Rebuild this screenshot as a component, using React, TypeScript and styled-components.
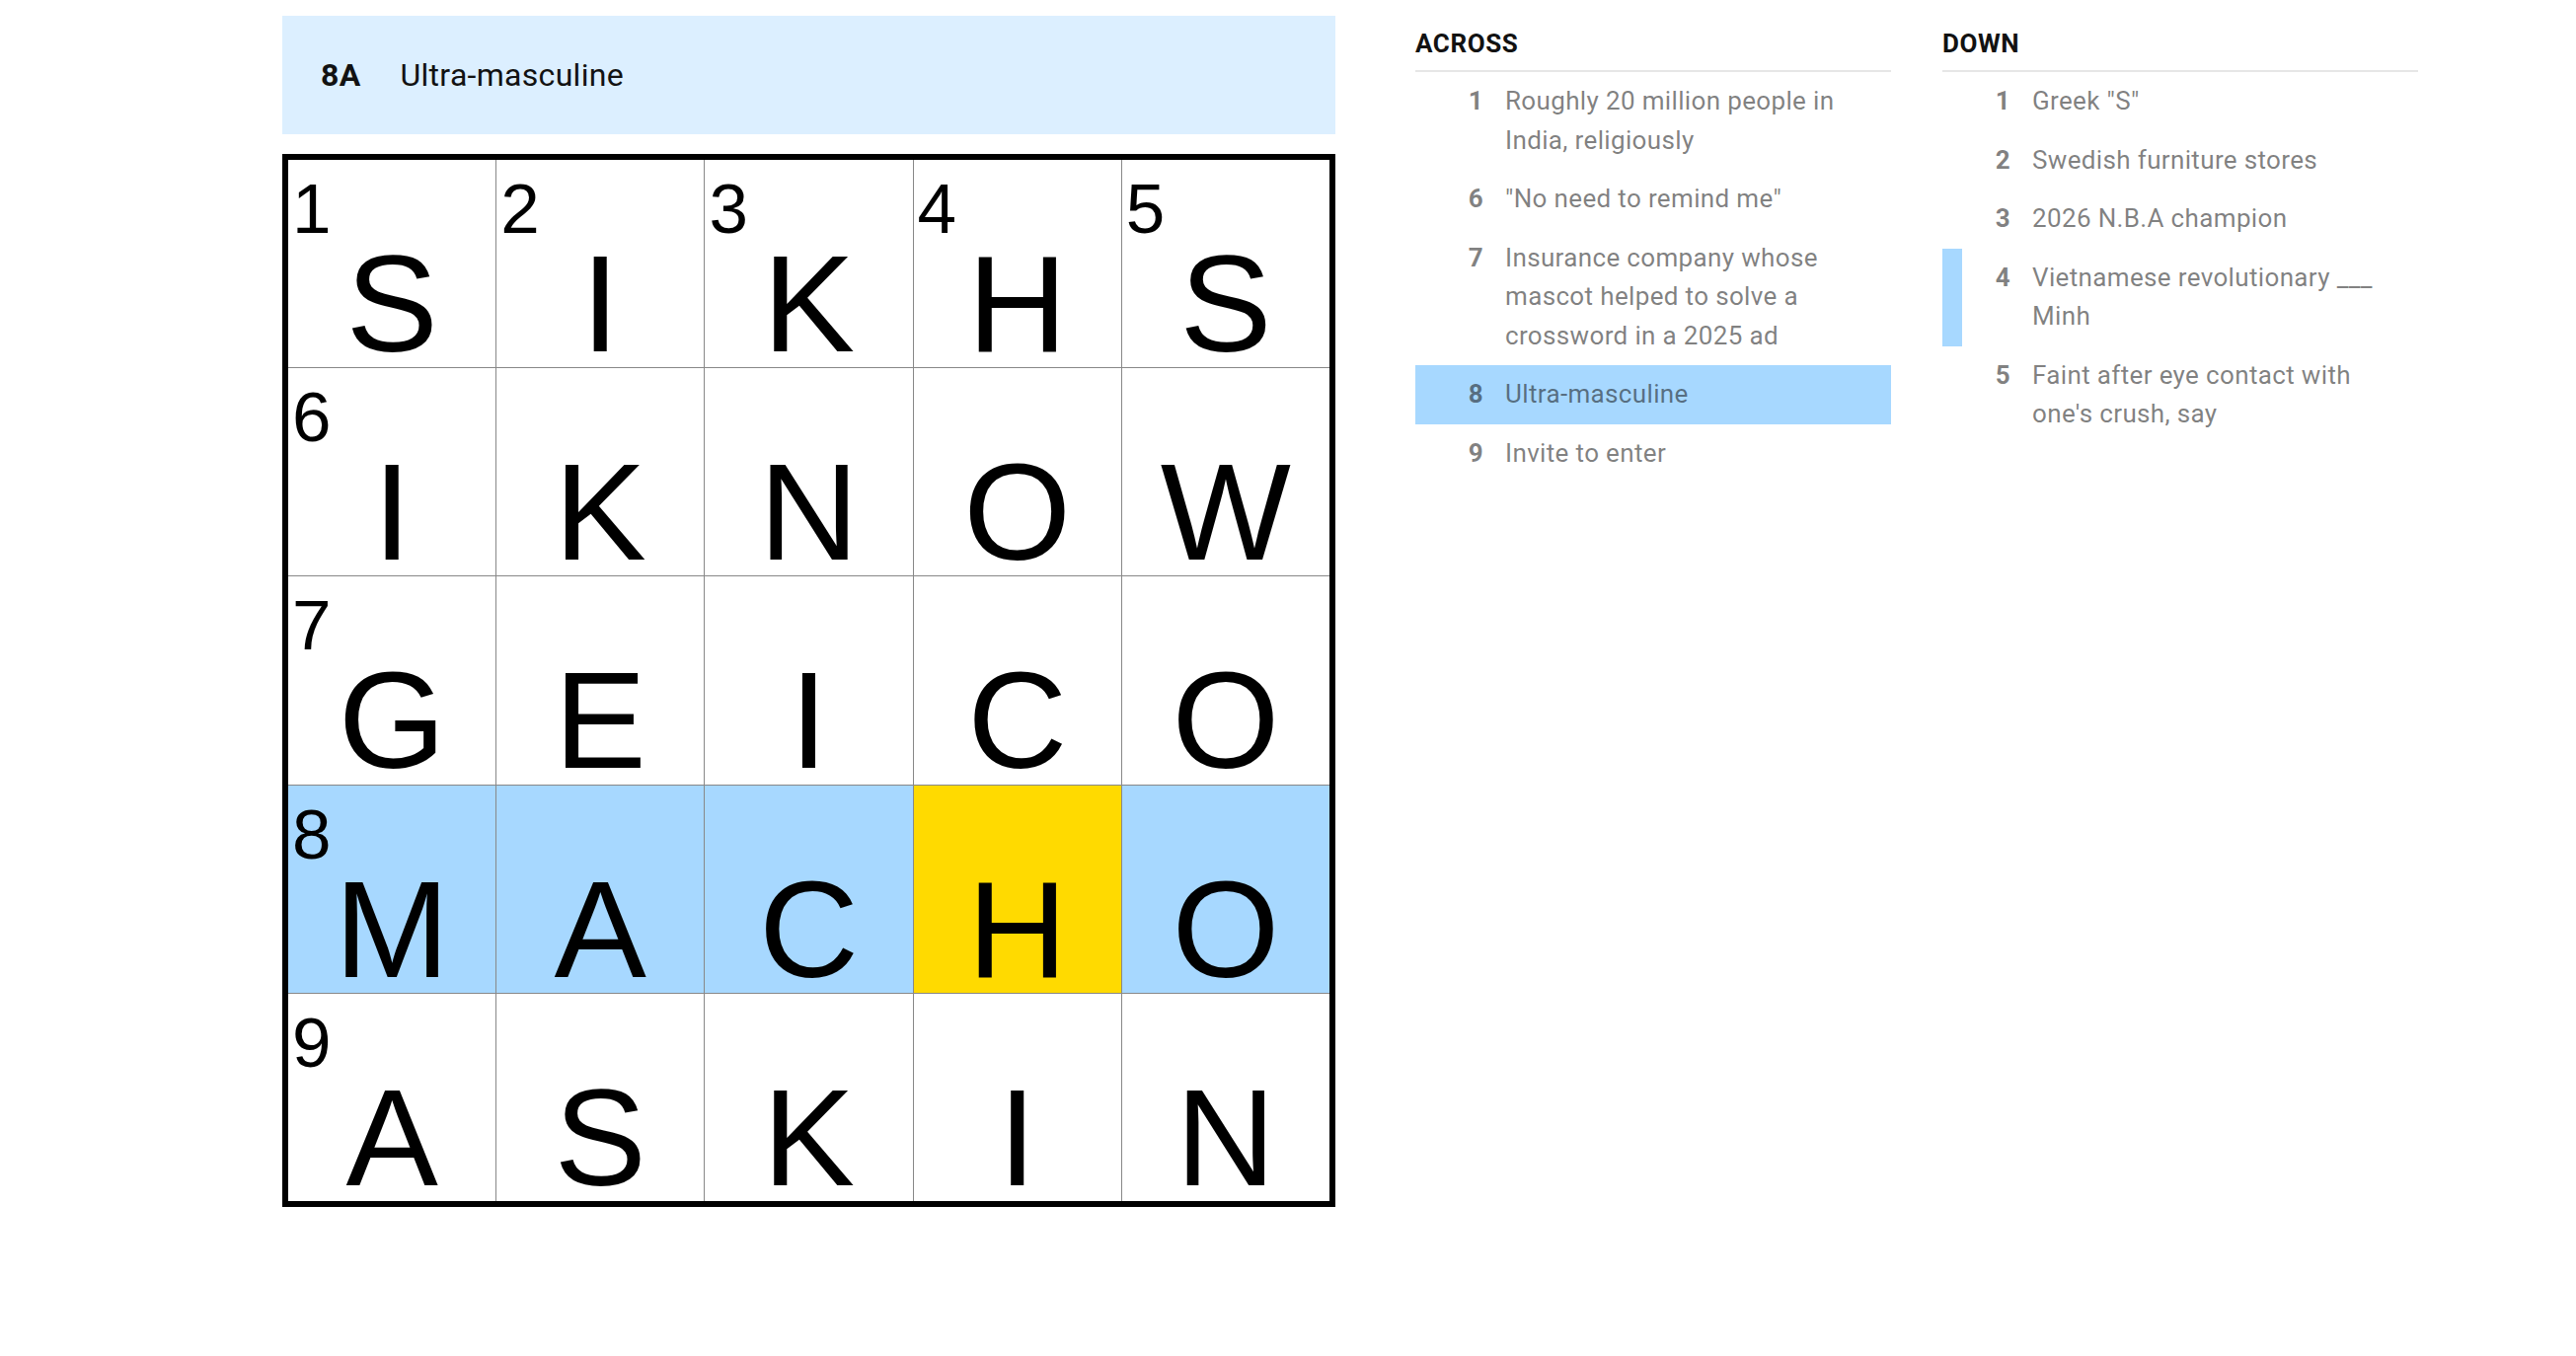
import React from "react";
import styled, { createGlobalStyle } from "styled-components";

const GlobalStyle = createGlobalStyle`
  html, body {
    margin: 0;
    padding: 0;
    background: #ffffff;
  }
  body {
    font-family: Roboto, "Liberation Sans", Arial, sans-serif;
  }
`;

const SIZE = 5;

const letters = ["SIKHS", "IKNOW", "GEICO", "MACHO", "ASKIN"];

const numbers: Record<string, number> = {
  "0-0": 1,
  "0-1": 2,
  "0-2": 3,
  "0-3": 4,
  "0-4": 5,
  "1-0": 6,
  "2-0": 7,
  "3-0": 8,
  "4-0": 9,
};

const activeRow = 3;
const activeCol = 3;

type Clue = { num: number; text: string; state?: "active" | "cross" };

const acrossClues: Clue[] = [
  { num: 1, text: "Roughly 20 million people in India, religiously" },
  { num: 6, text: "\"No need to remind me\"" },
  { num: 7, text: "Insurance company whose mascot helped to solve a crossword in a 2025 ad" },
  { num: 8, text: "Ultra-masculine", state: "active" },
  { num: 9, text: "Invite to enter" },
];

const downClues: Clue[] = [
  { num: 1, text: "Greek \"S\"" },
  { num: 2, text: "Swedish furniture stores" },
  { num: 3, text: "2026 N.B.A champion" },
  { num: 4, text: "Vietnamese revolutionary ___ Minh", state: "cross" },
  { num: 5, text: "Faint after eye contact with one's crush, say" },
];

type CellTone = "plain" | "word" | "focus";

const cellColors: Record<CellTone, string> = {
  plain: "#ffffff",
  word: "#a7d8ff",
  focus: "#ffda00",
};

export default function App() {
  return (
    <>
      <GlobalStyle />
      <Page>
        <Board>
          <ClueBar>
            <ClueBarLabel>8A</ClueBarLabel>
            <ClueBarText>Ultra-masculine</ClueBarText>
          </ClueBar>
          <Grid>
            {letters.map((word, r) =>
              word.split("").map((ch, c) => {
                const tone: CellTone =
                  r === activeRow && c === activeCol ? "focus" : r === activeRow ? "word" : "plain";
                const num = numbers[`${r}-${c}`];
                return (
                  <Cell key={`${r}-${c}`} $tone={tone}>
                    {num && <CellNumber>{num}</CellNumber>}
                    <CellLetter>{ch}</CellLetter>
                  </Cell>
                );
              })
            )}
          </Grid>
        </Board>
        <ClueLists>
          <ClueColumn title="ACROSS" clues={acrossClues} />
          <ClueColumn title="DOWN" clues={downClues} />
        </ClueLists>
      </Page>
    </>
  );
}

function ClueColumn({ title, clues }: { title: string; clues: Clue[] }) {
  return (
    <Column>
      <ColumnTitle>{title}</ColumnTitle>
      <ClueList>
        {clues.map((clue) => (
          <ClueRow key={clue.num} $state={clue.state}>
            <ClueNum>{clue.num}</ClueNum>
            <ClueText>{clue.text}</ClueText>
          </ClueRow>
        ))}
      </ClueList>
    </Column>
  );
}

const Page = styled.div`
  display: flex;
  align-items: flex-start;
  padding: 16px 0 0 286px;
  min-height: 1374px;
  box-sizing: border-box;
`;

const Board = styled.div`
  display: flex;
  flex-direction: column;
  gap: 20px;
  width: 1067px;
  flex-shrink: 0;
`;

const ClueBar = styled.div`
  display: flex;
  align-items: center;
  gap: 40px;
  height: 120px;
  padding-left: 39px;
  background: #dcefff;
  color: #121212;
  font-family: Roboto, "Liberation Sans", sans-serif;
  font-size: 32px;
  letter-spacing: 0.3px;
`;

const ClueBarLabel = styled.span`
  font-weight: 700;
`;

const ClueBarText = styled.span`
  font-weight: 400;
`;

const Grid = styled.div`
  display: grid;
  grid-template-columns: repeat(${SIZE}, 1fr);
  grid-template-rows: repeat(${SIZE}, 1fr);
  gap: 1px;
  width: 1067px;
  height: 1067px;
  box-sizing: border-box;
  border: 6px solid #000000;
  background: #888888;
`;

const Cell = styled.div<{ $tone: CellTone }>`
  position: relative;
  display: flex;
  justify-content: center;
  align-items: flex-start;
  padding-top: 86px;
  box-sizing: border-box;
  background: ${({ $tone }) => cellColors[$tone]};
`;

const CellNumber = styled.span`
  position: absolute;
  top: 14px;
  left: 4px;
  font-family: "Liberation Sans", Arial, sans-serif;
  font-size: 71px;
  line-height: 71px;
  color: #000000;
`;

const CellLetter = styled.span`
  font-family: "Liberation Sans", Arial, sans-serif;
  font-size: 140px;
  line-height: 120px;
  color: #000000;
`;

const ClueLists = styled.div`
  display: flex;
  gap: 52px;
  margin-left: 81px;
  padding-top: 13px;
`;

const Column = styled.section`
  display: flex;
  flex-direction: column;
  width: 482px;
`;

const ColumnTitle = styled.h3`
  margin: 0;
  padding-bottom: 12px;
  border-bottom: 2px solid #e6e6e6;
  font-family: Roboto, "Liberation Sans", sans-serif;
  font-size: 26px;
  line-height: 30px;
  font-weight: 700;
  color: #121212;
  letter-spacing: 0.6px;
`;

const ClueList = styled.ol`
  list-style: none;
  margin: 0;
  padding: 0;
`;

const ClueRow = styled.li<{ $state?: "active" | "cross" }>`
  display: flex;
  align-items: flex-start;
  padding: 10px 26px 10px 0;
  border-left: 20px solid ${({ $state }) => ($state === "cross" ? "#a7d8ff" : "transparent")};
  background: ${({ $state }) => ($state === "active" ? "#a7d8ff" : "transparent")};
  font-family: Roboto, "Liberation Sans", sans-serif;
  font-size: 26px;
  line-height: 39.5px;
  letter-spacing: 0.35px;
  color: rgba(18, 18, 18, 0.55);
`;

const ClueNum = styled.span`
  flex: 0 0 49px;
  margin-right: 22px;
  text-align: right;
  font-weight: 700;
`;

const ClueText = styled.span`
  flex: 1;
`;
